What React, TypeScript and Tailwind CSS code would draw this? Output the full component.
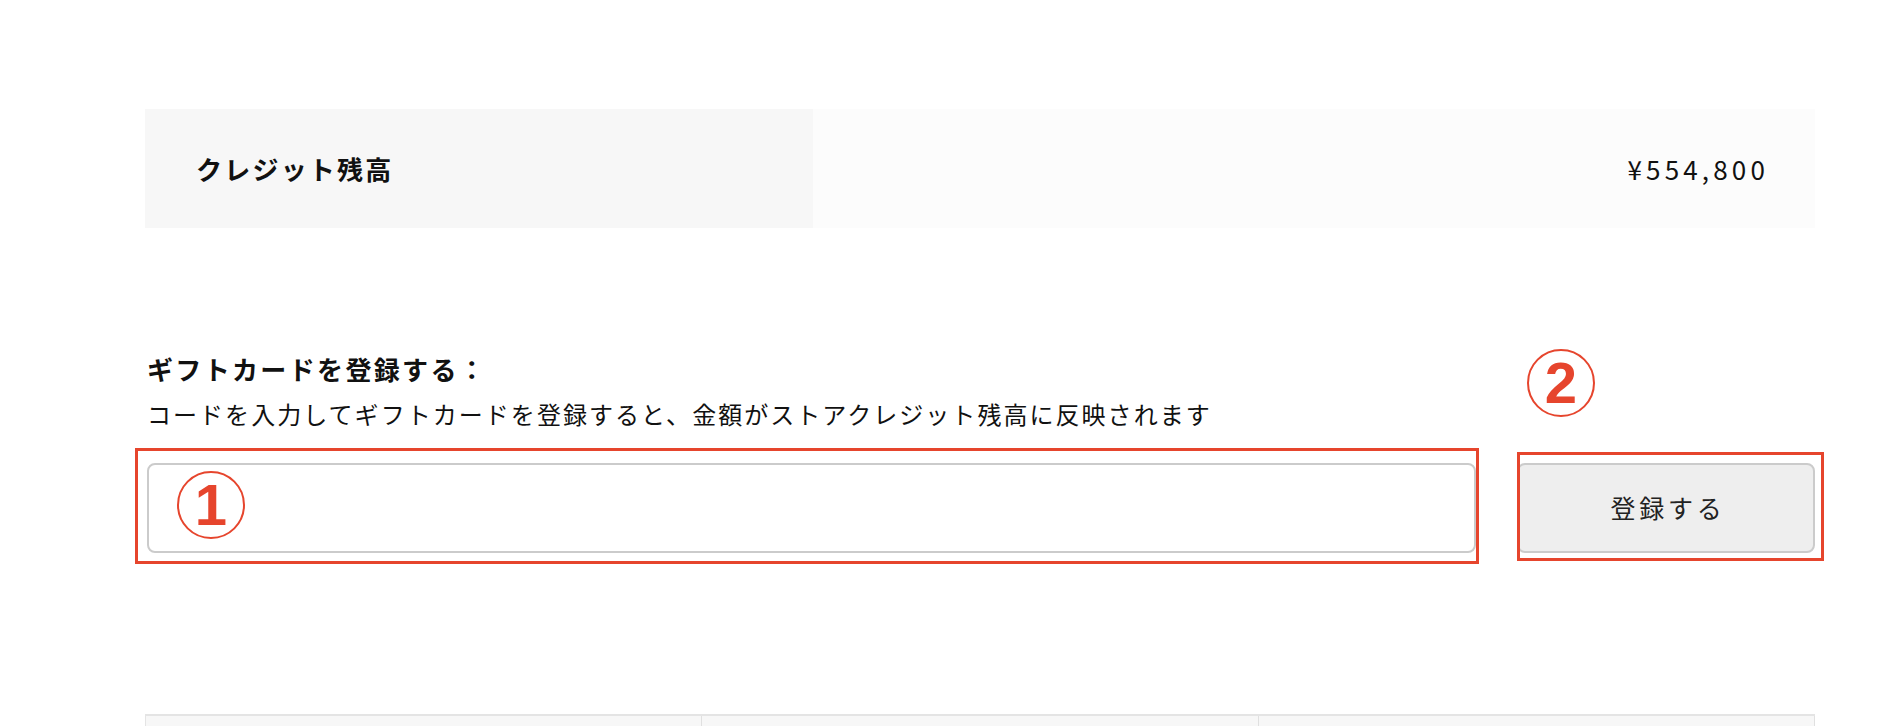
import React from "react";

const jp = "font-['Noto_Sans_CJK_JP','Noto_Sans',sans-serif]";

function Marker({ n }: { n: string }) {
  return (
    <span className="flex h-[68px] w-[68px] items-center justify-center rounded-full border-2 border-[#e6452d] font-['Liberation_Sans',sans-serif] text-[58px] font-bold leading-none text-[#e6452d]">
      {n}
    </span>
  );
}

export default function App() {
  return (
    <div className={`${jp} h-[726px] overflow-hidden bg-white pl-[145px] pt-[109px] text-[#111]`}>
      <div className="w-[1670px]">
        {/* balance row */}
        <div className="flex h-[119px]">
          <div className="flex w-[668px] items-center bg-[#f7f7f7] pl-[51px] text-[26px] font-bold tracking-[0.085em]">
            クレジット残高
          </div>
          <div className="flex flex-1 items-center justify-end bg-[#fcfcfc] pr-[46px] text-[26px] tracking-[0.16em]">
            ¥554,800
          </div>
        </div>

        {/* gift card form */}
        <div className="mt-[123px] pl-[2px]">
          <h2 className="text-[26px] font-bold leading-[36px] tracking-[0.09em]">ギフトカードを登録する：</h2>
          <p className="mt-[9px] text-[24px] leading-[36px] tracking-[0.085em]">
            コードを入力してギフトカードを登録すると、金額がストアクレジット残高に反映されます
          </p>

          <div className="mt-[31px] flex gap-[41px]">
            <div className="relative flex-1">
              <input
                type="text"
                className="h-[90px] w-full rounded-[8px] border-2 border-[#cbcbcb] bg-white px-4 outline-none"
              />
              <div className="pointer-events-none absolute -top-[15px] -left-[12px] -right-[3px] -bottom-[11px] border-[3px] border-[#e6452d]" />
              <div className="pointer-events-none absolute top-[8px] left-[30px]">
                <Marker n="1" />
              </div>
            </div>
            <div className="relative w-[298px]">
              <button className="flex h-[90px] w-full items-center justify-center rounded-[8px] border-2 border-[#cbcbcb] bg-[#eeeeee] pl-[4px] text-[25px] tracking-[0.15em] text-[#222]">
                登録する
              </button>
              <div className="pointer-events-none absolute -top-[11px] left-0 -right-[9px] -bottom-[8px] border-[3px] border-[#e6452d]" />
              <div className="pointer-events-none absolute -top-[114px] left-[10px]">
                <Marker n="2" />
              </div>
            </div>
          </div>
        </div>

        {/* history table header */}
        <div className="mt-[161px] grid h-[80px] grid-cols-3 border-t-2 border-l border-[#e4e4e4] bg-[#f7f7f7]">
          <div className="border-r border-[#e0e0e0]" />
          <div className="border-r border-[#e0e0e0]" />
          <div className="border-r border-[#e0e0e0]" />
        </div>
      </div>
    </div>
  );
}
